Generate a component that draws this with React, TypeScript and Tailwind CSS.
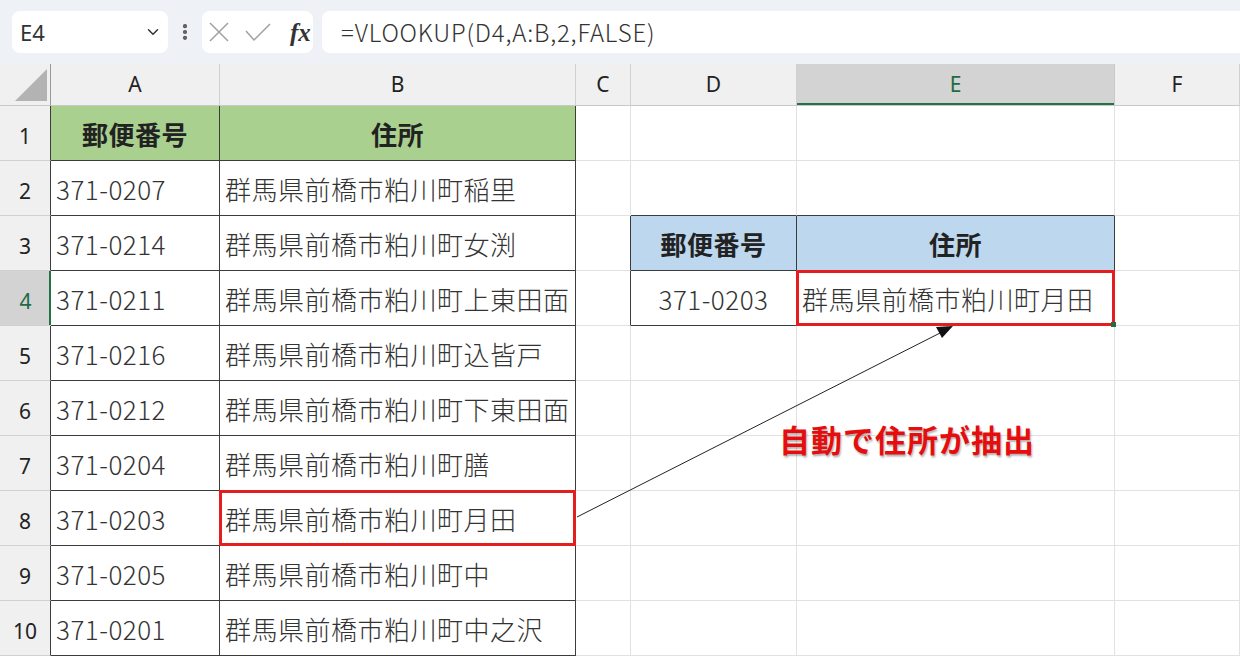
import { ChevronDown, EllipsisVertical } from 'lucide-react';

// Column widths match the sheet in the screenshot (row-header + A..F).
const COLS = ['A', 'B', 'C', 'D', 'E', 'F'];

const ROWS: [string, string][] = [
  ['371-0207', '群馬県前橋市粕川町稲里'],
  ['371-0214', '群馬県前橋市粕川町女渕'],
  ['371-0211', '群馬県前橋市粕川町上東田面'],
  ['371-0216', '群馬県前橋市粕川町込皆戸'],
  ['371-0212', '群馬県前橋市粕川町下東田面'],
  ['371-0204', '群馬県前橋市粕川町膳'],
  ['371-0203', '群馬県前橋市粕川町月田'],
  ['371-0205', '群馬県前橋市粕川町中'],
  ['371-0201', '群馬県前橋市粕川町中之沢'],
];

type Cell = {
  text?: string;
  kind?: 'green' | 'blue' | 'center' | 'left';
  mark?: boolean;
  handle?: boolean;
};

function cellAt(c: number, r: number): Cell {
  // c: 1=A .. 6=F, r: 1..10
  if (r === 1 && c === 1) return { text: '郵便番号', kind: 'green' };
  if (r === 1 && c === 2) return { text: '住所', kind: 'green' };
  if (r >= 2 && c === 1) return { text: ROWS[r - 2][0], kind: 'left' };
  if (r >= 2 && c === 2) return { text: ROWS[r - 2][1], kind: 'left', mark: r === 8 };
  if (r === 3 && c === 4) return { text: '郵便番号', kind: 'blue' };
  if (r === 3 && c === 5) return { text: '住所', kind: 'blue' };
  if (r === 4 && c === 4) return { text: '371-0203', kind: 'center' };
  if (r === 4 && c === 5) return { text: '群馬県前橋市粕川町月田', kind: 'left', mark: true, handle: true };
  return {};
}

const inTable = (c: number, r: number) =>
  (c >= 1 && c <= 2 && r >= 1 && r <= 10) || (c >= 4 && c <= 5 && r >= 3 && r <= 4);

function FormulaBar() {
  return (
    <div className="flex h-[64px] items-center bg-[#eef2f6] pl-[12px]">
      <div className="flex h-[42px] w-[156px] items-center justify-between rounded-[8px] bg-white pl-[8px] pr-[6px]">
        <span className="font-['Noto_Sans','Liberation_Sans',sans-serif] text-[22px] text-[#333]">E4</span>
        <ChevronDown size={18} strokeWidth={2} className="text-[#333]" />
      </div>
      <div className="flex w-[34px] justify-center text-[#555]">
        <EllipsisVertical size={20} strokeWidth={3} />
      </div>
      <div className="flex h-[42px] w-[111px] items-center rounded-[8px] bg-white pl-[6px]">
        <svg width="22" height="22" viewBox="0 0 22 22" className="text-[#a0a0a0]">
          <path d="M2 2 L20 20 M20 2 L2 20" stroke="currentColor" strokeWidth="1.5" fill="none" />
        </svg>
        <svg width="28" height="22" viewBox="0 0 28 22" className="ml-[14px] text-[#a0a0a0]">
          <path d="M2 10 L10 19 L26 3" stroke="currentColor" strokeWidth="1.5" fill="none" />
        </svg>
        <span className="ml-[18px] font-['Liberation_Serif',serif] text-[25px] font-bold italic leading-none text-[#333]">
          fx
        </span>
      </div>
      <div className="ml-[9px] flex h-[42px] flex-1 items-center rounded-l-[8px] bg-white pl-[19px]">
        <span className="font-['Noto_Sans_CJK_JP','Noto_Sans',sans-serif] text-[24px] font-light tracking-[0.8px] text-[#333]">
          =VLOOKUP(D4,A:B,2,FALSE)
        </span>
      </div>
    </div>
  );
}

function ColumnHeaders() {
  return (
    <>
      <div className="relative border-r border-b border-r-[#9a9a9a] border-b-[#c9c9c9] bg-[#f0f0f0]">
        <svg width="51" height="42" className="absolute inset-0">
          <polygon points="15,37 47,37 47,5" fill="#b3b3b3" />
        </svg>
      </div>
      {COLS.map((l, i) => {
        const active = i === 4;
        return (
          <div
            key={l}
            className={
              active
                ? "flex items-center justify-center border-r border-b border-r-[#c9c9c9] border-b-[#c9c9c9] bg-[#d3d3d3] font-['Noto_Sans','Liberation_Sans',sans-serif] text-[21px] text-[#1f6b42] shadow-[inset_0_-2px_0_#217346]"
                : "flex items-center justify-center border-r border-b border-r-[#d0d0d0] border-b-[#c9c9c9] bg-[#f0f0f0] font-['Noto_Sans','Liberation_Sans',sans-serif] text-[21px] text-[#222]"
            }
          >
            {l}
          </div>
        );
      })}
    </>
  );
}

function RowHeader({ r }: { r: number }) {
  if (r === 4) {
    return (
      <div className="flex items-center justify-center border-b border-b-[#d0d0d0] bg-[#d3d3d3] pt-[8px] font-['Noto_Sans','Liberation_Sans',sans-serif] text-[21px] text-[#1f6b42] shadow-[inset_-2px_0_0_#217346]">
        {r}
      </div>
    );
  }
  return (
    <div className="flex items-center justify-center border-r border-b border-r-[#3c3c3c] border-b-[#d0d0d0] bg-[#f0f0f0] pt-[8px] font-['Noto_Sans','Liberation_Sans',sans-serif] text-[21px] text-[#222]">
      {r}
    </div>
  );
}

function SheetCell({ c, r }: { c: number; r: number }) {
  const cell = cellAt(c, r);
  const rDark = inTable(c, r) || inTable(c + 1, r);
  const bDark = inTable(c, r) || inTable(c, r + 1);

  const border = [
    'border-r border-b',
    rDark ? 'border-r-[#3c3c3c]' : 'border-r-[#e1e1e1]',
    bDark ? 'border-b-[#3c3c3c]' : 'border-b-[#e1e1e1]',
  ].join(' ');

  let look = 'bg-white';
  if (cell.kind === 'green') look = 'bg-[#a9d08e] justify-center font-bold text-[#222]';
  if (cell.kind === 'blue') look = 'bg-[#bdd7ee] justify-center font-bold text-[#222]';
  if (cell.kind === 'center') look = 'bg-white justify-center font-light text-[#333]';
  if (cell.kind === 'left') look = 'bg-white pl-[5px] font-light text-[#333]';

  return (
    <div
      className={`relative flex items-center whitespace-nowrap font-['Noto_Sans_CJK_JP','Noto_Sans',sans-serif] text-[26px] tracking-[0.5px] ${border} ${look}`}
    >
      {cell.text}
      {cell.mark && (
        <div className="pointer-events-none absolute -inset-px z-10 border-[3px] border-[#e41e1e]">
          {cell.handle && (
            <div className="absolute -right-[4px] -bottom-[4px] size-[5px] bg-[#2b6a3e]" />
          )}
        </div>
      )}
    </div>
  );
}

export default function App() {
  return (
    <div className="relative h-[658px] w-[1240px] overflow-hidden bg-white">
      <FormulaBar />
      <div className="grid grid-cols-[51px_169px_356px_55px_166px_318px_125px] grid-rows-[42px_repeat(10,55px)]">
        <ColumnHeaders />
        {Array.from({ length: 10 }, (_, i) => i + 1).map((r) => (
          <div key={r} className="contents">
            <RowHeader r={r} />
            {COLS.map((_, ci) => (
              <SheetCell key={ci} c={ci + 1} r={r} />
            ))}
          </div>
        ))}
      </div>

      {/* Callout arrow from B8 to E4 */}
      <svg className="pointer-events-none absolute inset-0 z-20" width="1240" height="658">
        <line x1="577" y1="517" x2="942" y2="332" stroke="#222" strokeWidth="1" />
        <polygon points="953,326 942,338 936,327" fill="#111" />
      </svg>

      <div className="pointer-events-none absolute left-[779px] top-[419px] z-20 font-['Noto_Sans_CJK_JP',sans-serif] text-[31px] font-bold leading-[40px] tracking-[1px] text-[#e50d0d] [text-shadow:1px_2px_2px_rgba(0,0,0,0.3)]">
        自動で住所が抽出
      </div>
    </div>
  );
}
